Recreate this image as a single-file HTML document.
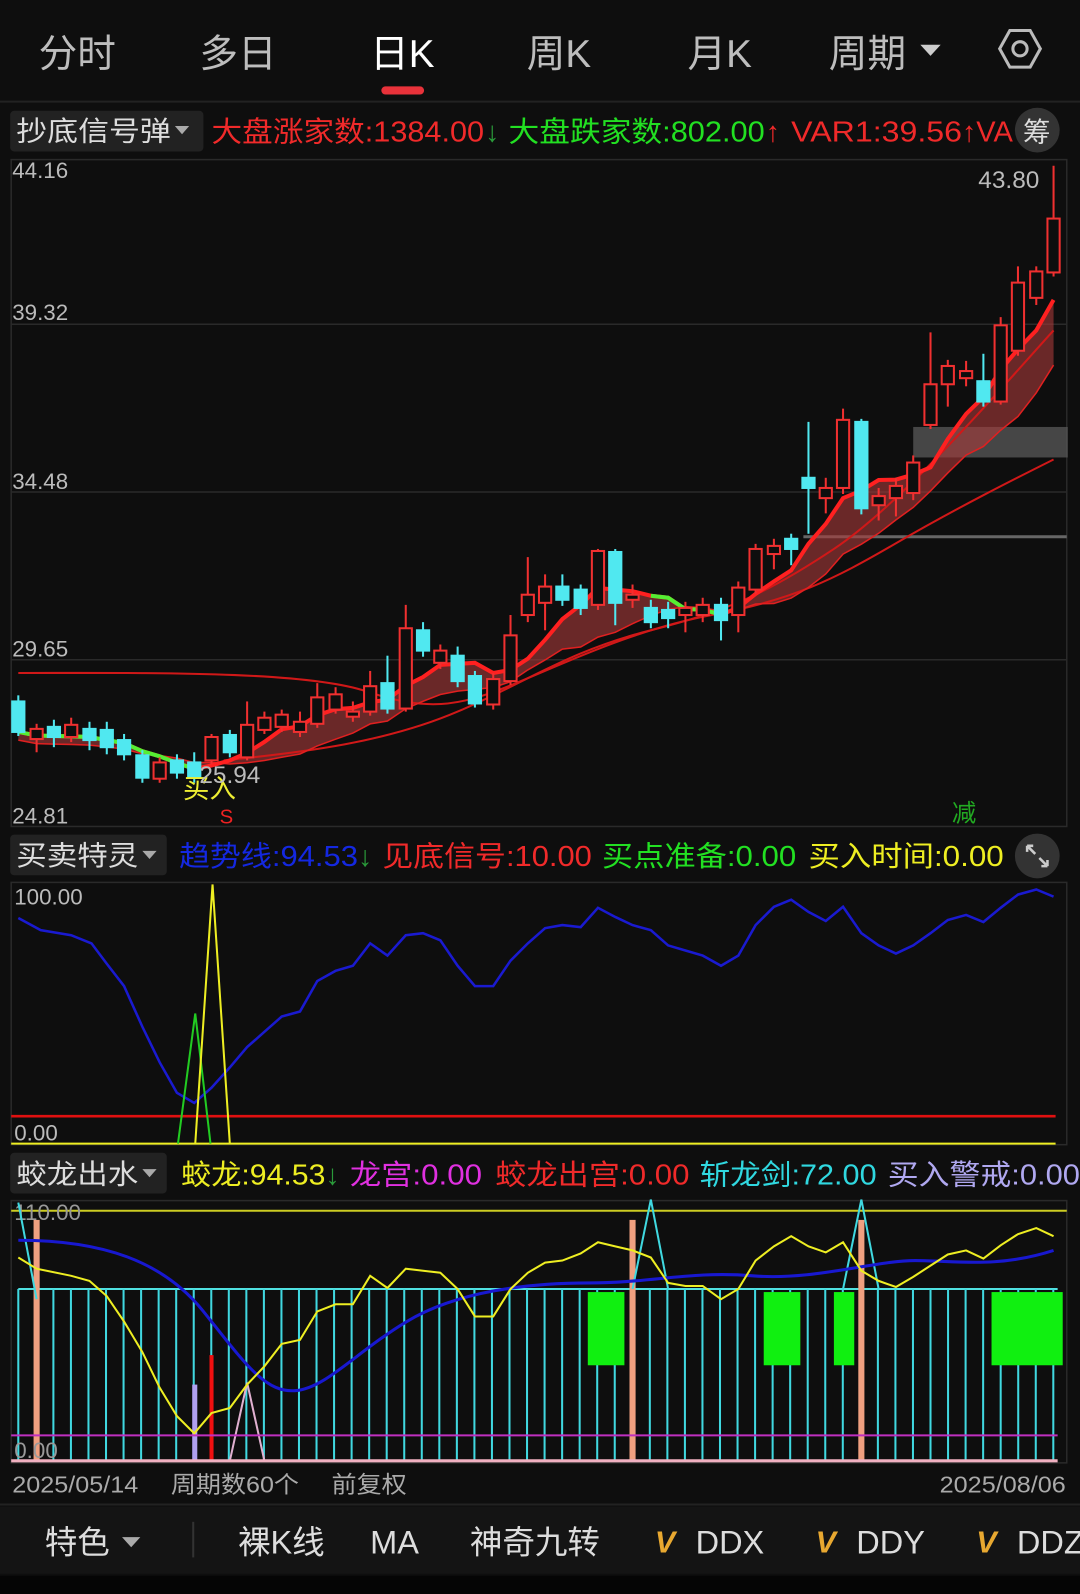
<!DOCTYPE html>
<html><head><meta charset="utf-8"><style>
html,body{margin:0;padding:0;background:#0d0d0d;width:1080px;height:1594px;overflow:hidden}
svg{display:block}
text{font-family:"Liberation Sans","Noto Sans CJK SC",sans-serif}
</style></head><body>
<svg id="s" width="1080" height="1594" viewBox="0 0 1062 1568" preserveAspectRatio="none" xmlns="http://www.w3.org/2000/svg">
<rect width="1062" height="1568" fill="#0e0e0e"/>
<g font-size="38" fill="#bdbdbd">
<text x="38" y="66">分时</text><text x="196" y="66">多日</text>
<text x="364" y="66" fill="#fff">日K</text><text x="518" y="66">周K</text>
<text x="676" y="66">月K</text><text x="815" y="66">周期</text>
</g>
<path d="M905 44h20l-10 11z" fill="#ccc"/>
<path d="M993 30l20 0l10 18l-10 18l-20 0l-10-18z" fill="none" stroke="#bbb" stroke-width="3"/>
<circle cx="1003" cy="48" r="7" fill="none" stroke="#bbb" stroke-width="3"/>
<rect x="375" y="85" width="42" height="8" rx="4" fill="#e8323a"/>
<line x1="0" y1="100" x2="1062" y2="100" stroke="#222" stroke-width="2"/>
<rect x="10" y="109" width="190" height="40" rx="4" fill="#222"/>
<text x="16" y="138" font-size="27" fill="#ddd" textLength="152" lengthAdjust="spacingAndGlyphs">抄底信号弹</text><path d="M172 124h14l-7 8z" fill="#aaa"/>
<g font-size="28" lengthAdjust="spacingAndGlyphs">
<text x="208" y="139" fill="#f02a2a" textLength="268" lengthAdjust="spacingAndGlyphs">大盘涨家数:1384.00</text>
<text x="477" y="139" fill="#2a9a3a">↓</text>
<text x="500" y="139" fill="#22e022" textLength="252" lengthAdjust="spacingAndGlyphs">大盘跌家数:802.00</text>
<text x="753" y="139" fill="#f02a2a">↑</text>
<text x="778" y="139" fill="#f02a2a" textLength="168" lengthAdjust="spacingAndGlyphs">VAR1:39.56</text>
<text x="946" y="139" fill="#f02a2a">↑</text>
<text x="960" y="139" fill="#f02a2a" textLength="36" lengthAdjust="spacingAndGlyphs">VA</text>
</g>
<circle cx="1020" cy="128" r="22" fill="#333"/><text x="1006" y="139" font-size="27" fill="#ddd">筹</text>
<rect x="11" y="157" width="1038" height="656" fill="none" stroke="#2a2a2a" stroke-width="1.5"/>
<g stroke="#2a2a2a" stroke-width="1.5"><line x1="11" y1="319" x2="1049" y2="319"/><line x1="11" y1="484" x2="1049" y2="484"/><line x1="11" y1="649" x2="1049" y2="649"/></g>
<g font-size="22" fill="#bbb"><text x="12" y="175">44.16</text><text x="12" y="315">39.32</text><text x="12" y="481">34.48</text><text x="12" y="646">29.65</text><text x="12" y="810">24.81</text><text x="962" y="185" font-size="24">43.80</text></g>
<rect x="898" y="420" width="152" height="30" fill="#555" opacity="0.8"/>
<line x1="790" y1="528" x2="1049" y2="528" stroke="#666" stroke-width="3"/>
<g id="main"></g>
<text x="180" y="785" font-size="26" fill="#ee3">买入</text>
<text x="196" y="770" font-size="24" fill="#bbb">25.94</text>
<text x="216" y="810" font-size="20" fill="#e22">S</text>
<text x="936" y="808" font-size="24" fill="#2a2">减</text>
<rect x="10" y="821" width="154" height="40" rx="4" fill="#222"/>
<text x="16" y="851" font-size="27" fill="#ddd" textLength="120" lengthAdjust="spacingAndGlyphs">买卖特灵</text><path d="M140 837h14l-7 8z" fill="#aaa"/>
<g font-size="28">
<text x="176" y="852" fill="#1428e0" textLength="176" lengthAdjust="spacingAndGlyphs">趋势线:94.53</text><text x="352" y="852" fill="#2a9a3a">↓</text>
<text x="376" y="852" fill="#f02a2a" textLength="206" lengthAdjust="spacingAndGlyphs">见底信号:10.00</text>
<text x="592" y="852" fill="#22e022" textLength="191" lengthAdjust="spacingAndGlyphs">买点准备:0.00</text>
<text x="795" y="852" fill="#eeee22" textLength="192" lengthAdjust="spacingAndGlyphs">买入时间:0.00</text>
</g>
<circle cx="1020" cy="842" r="22" fill="#333"/>
<path d="M1010 832l8 8M1010 832v6M1010 832h6M1030 852l-8-8M1030 852v-6M1030 852h-6" stroke="#ccc" stroke-width="2.5" fill="none"/>
<rect x="11" y="868" width="1038" height="258" fill="none" stroke="#2a2a2a" stroke-width="1.5"/>
<text x="14" y="890" font-size="22" fill="#bbb">100.00</text><text x="14" y="1122" font-size="22" fill="#bbb">0.00</text>
<line x1="11" y1="1098" x2="1038" y2="1098" stroke="#e01010" stroke-width="2.5"/>
<line x1="11" y1="1125" x2="1038" y2="1125" stroke="#eeee22" stroke-width="2"/>
<polyline fill="none" stroke="#1a1ad0" stroke-width="2.5" points="18,903 40,915 70,920 90,928 105,948 122,970 140,1010 157,1045 174,1075 191,1085 208,1070 226,1050 243,1030 260,1015 277,1000 295,995 312,965 330,955 347,950 364,928 381,940 399,920 416,918 433,925 450,950 467,970 485,970 502,945 519,928 536,913 553,910 571,912 588,893 605,902 622,910 640,915 657,930 674,935 691,940 709,950 726,940 743,910 761,892 778,885 795,897 812,906 829,892 847,918 864,930 881,938 898,930 915,918 932,905 950,900 967,907 984,893 1001,880 1019,875 1036,882"/>
<polyline fill="none" stroke="#22cc22" stroke-width="2" points="175,1125 192,997 207,1125"/>
<polyline fill="none" stroke="#eeee22" stroke-width="2" points="192,1125 209,870 226,1125"/>
<rect x="10" y="1134" width="154" height="40" rx="4" fill="#222"/>
<text x="16" y="1164" font-size="27" fill="#ddd" textLength="120" lengthAdjust="spacingAndGlyphs">蛟龙出水</text><path d="M140 1150h14l-7 8z" fill="#aaa"/>
<g font-size="28">
<text x="178" y="1165" fill="#eeee22" textLength="142" lengthAdjust="spacingAndGlyphs">蛟龙:94.53</text><text x="320" y="1165" fill="#2a9a3a">↓</text>
<text x="344" y="1165" fill="#e030e0" textLength="130" lengthAdjust="spacingAndGlyphs">龙宫:0.00</text>
<text x="487" y="1165" fill="#f02a2a" textLength="191" lengthAdjust="spacingAndGlyphs">蛟龙出宫:0.00</text>
<text x="688" y="1165" fill="#30d8e0" textLength="174" lengthAdjust="spacingAndGlyphs">斩龙剑:72.00</text>
<text x="873" y="1165" fill="#b0a8f0" textLength="189" lengthAdjust="spacingAndGlyphs">买入警戒:0.00</text>
</g>
<rect x="11" y="1181" width="1038" height="258" fill="none" stroke="#2a2a2a" stroke-width="1.5"/>
<line x1="11" y1="1191" x2="1049" y2="1191" stroke="#cccc22" stroke-width="2"/>
<text x="14" y="1200" font-size="22" fill="#999">110.00</text>
<g id="bot"></g>
<line x1="11" y1="1412" x2="1040" y2="1412" stroke="#c030c0" stroke-width="2"/>
<line x1="11" y1="1437" x2="1040" y2="1437" stroke="#f0b0c0" stroke-width="3"/>
<text x="14" y="1434" font-size="22" fill="#999">0.00</text>
<g font-size="23" fill="#aaa"><text x="12" y="1468" textLength="124" lengthAdjust="spacingAndGlyphs">2025/05/14</text><text x="168" y="1468" textLength="126" lengthAdjust="spacingAndGlyphs">周期数60个</text><text x="326" y="1468" textLength="74" lengthAdjust="spacingAndGlyphs">前复权</text><text x="924" y="1468" textLength="124" lengthAdjust="spacingAndGlyphs">2025/08/06</text></g>
<line x1="0" y1="1480" x2="1062" y2="1480" stroke="#222" stroke-width="2"/>
<rect x="0" y="1482" width="1062" height="66" fill="#141414"/>
<g font-size="32" fill="#ddd"><text x="44" y="1528">特色</text><text x="234" y="1528">裸K线</text><text x="364" y="1528">MA</text><text x="462" y="1528">神奇九转</text><text x="684" y="1528">DDX</text><text x="842" y="1528">DDY</text><text x="1000" y="1528">DDZ</text></g>
<path d="M120 1512h18l-9 10z" fill="#aaa"/>
<line x1="190" y1="1497" x2="190" y2="1532" stroke="#333" stroke-width="2"/>
<g font-size="30" fill="#e8a830" font-style="italic" font-weight="bold"><text x="644" y="1527">V</text><text x="802" y="1527">V</text><text x="960" y="1527">V</text></g>
<rect x="0" y="1550" width="1062" height="18" fill="#050505"/>
</svg>
<script>
var NS="http://www.w3.org/2000/svg";
function el(p,t,a){var e=document.createElementNS(NS,t);for(var k in a)e.setAttribute(k,a[k]);p.appendChild(e);return e;}
var m=document.getElementById('main');
var c=[[18,690,720,684,724,0],[36,717,727,712,740,1],[53,715,725,708,735,0],[70,713,725,706,730,1],[88,717,728,710,738,0],[105,718,735,710,742,0],[122,728,742,722,748,0],[140,743,765,738,770,0],[157,766,750,745,770,1],[174,748,760,742,766,0],[191,750,765,740,770,0],[208,748,725,722,752,1],[226,723,740,718,745,0],[243,745,713,690,748,1],[260,718,706,700,722,1],[277,715,703,698,720,1],[295,720,710,700,725,1],[312,712,686,672,716,1],[330,698,683,676,702,1],[347,705,700,690,710,1],[364,700,675,660,704,1],[381,672,697,645,702,0],[399,697,618,595,700,1],[416,620,640,612,646,0],[433,652,640,634,658,1],[450,645,670,636,676,0],[467,665,692,660,696,0],[485,693,668,662,698,1],[502,670,625,605,674,1],[519,605,585,548,612,1],[536,593,577,565,620,1],[553,577,590,565,596,0],[571,580,598,575,605,0],[588,595,542,540,600,1],[605,543,593,540,615,0],[622,590,585,575,598,1],[640,598,612,590,618,0],[657,600,608,592,618,0],[674,605,598,592,622,1],[691,605,595,588,612,1],[709,595,610,588,630,0],[726,605,578,572,622,1],[743,580,540,535,584,1],[761,545,537,530,560,1],[778,530,540,525,556,0],[795,470,480,415,525,0],[812,490,480,470,505,1],[829,480,413,402,486,1],[847,415,500,412,506,0],[864,497,488,480,512,1],[881,490,478,470,508,1],[898,485,455,448,492,1],[915,418,378,327,422,1],[932,378,360,354,400,1],[950,372,365,355,380,1],[967,375,395,348,400,0],[984,395,320,312,398,1],[1001,345,278,262,350,1],[1019,293,267,262,300,1],[1036,268,215,163,272,1]];
var ma10=[];
c.forEach(function(d,i){var s=0,n=0;for(var j=Math.max(0,i-4);j<=i;j++){s+=c[j][2];n++;}ma10.push([d[0],s/n]);});
var band=[];
c.forEach(function(d,i){var s=0,n=0;for(var j=Math.max(0,i-9);j<=i;j++){s+=c[j][2];n++;}band.push([d[0],s/n+8]);});
var p1=ma10.map(function(p){return p[0]+','+p[1].toFixed(1)}).join(' ');
var p2=band.slice().reverse().map(function(p){return p[0]+','+p[1].toFixed(1)}).join(' ');
el(m,'polygon',{points:p1+' '+p2,fill:'#a83a3a',opacity:'0.6'});
el(m,'path',{d:'M18 662 C150 662 300 660 360 680 S450 695 500 675 S620 620 700 605 S820 570 880 535 S1000 470 1036 452',fill:'none',stroke:'#d01818','stroke-width':'2'});
el(m,'path',{d:'M220 748 C300 740 380 730 450 700 S560 640 640 620 S760 580 820 540 S960 410 1036 325',fill:'none',stroke:'#d01818','stroke-width':'2'});
el(m,'polyline',{points:band.map(function(p){return p[0]+','+p[1].toFixed(1)}).join(' '),fill:'none',stroke:'#e02020','stroke-width':'1.5'});
el(m,'polyline',{points:p1,fill:'none',stroke:'#ff2020','stroke-width':'4'});
el(m,'polyline',{points:ma10.slice(0,11).map(function(p){return p[0]+','+p[1].toFixed(1)}).join(' '),fill:'none',stroke:'#55ee33','stroke-width':'4'});
el(m,'polyline',{points:ma10.slice(36,41).map(function(p){return p[0]+','+p[1].toFixed(1)}).join(' '),fill:'none',stroke:'#55ee33','stroke-width':'4'});
c.forEach(function(d){var col=d[5]?'#f03030':'#50e8f0';
el(m,'line',{x1:d[0],x2:d[0],y1:d[3],y2:d[4],stroke:col,'stroke-width':'2'});
var t=Math.min(d[1],d[2]),h=Math.max(2,Math.abs(d[1]-d[2]));
el(m,'rect',{x:d[0]-6,y:t,width:12,height:h,fill:d[5]?'#0e0e0e':col,stroke:col,'stroke-width':'2'});});
var b=document.getElementById('bot');
el(b,'line',{x1:18,x2:1040,y1:1268,y2:1268,stroke:'#50e0e0','stroke-width':'2'});
for(var i=0;i<60;i++){var x=18+i*17.25;el(b,'line',{x1:x,x2:x,y1:1268,y2:1437,stroke:'#40d8e0','stroke-width':'2'});}
[[578,36],[751,36],[820,20],[975,70]].forEach(function(r){el(b,'rect',{x:r[0],y:1271,width:r[1],height:72,fill:'#10f010'});});
[36,622,847].forEach(function(x){el(b,'rect',{x:x-3,y:1200,width:6,height:237,fill:'#f0a080'});});
el(b,'rect',{x:189,y:1362,width:5,height:75,fill:'#b0a0f0'});
el(b,'rect',{x:206,y:1333,width:4,height:104,fill:'#f01010'});
el(b,'polyline',{points:'226,1437 243,1360 260,1437',fill:'none',stroke:'#e0b0d0','stroke-width':'2'});
el(b,'polyline',{points:'18,1183 36,1278',fill:'none',stroke:'#40d8e0','stroke-width':'2'});
el(b,'polyline',{points:'622,1268 640,1180 657,1268',fill:'none',stroke:'#40d8e0','stroke-width':'2'});
el(b,'polyline',{points:'829,1268 847,1180 864,1268',fill:'none',stroke:'#40d8e0','stroke-width':'2'});
el(b,'path',{d:'M18 1220 C100 1220 160 1240 200 1290 S260 1370 290 1368 S350 1330 400 1300 S520 1262 580 1262 S680 1250 740 1255 S860 1240 900 1240 S980 1248 1036 1230',fill:'none',stroke:'#1818d0','stroke-width':'3'});
el(b,'polyline',{points:'18,1237 36,1248 70,1255 88,1260 105,1275 122,1300 140,1330 157,1365 174,1393 191,1410 208,1390 226,1385 243,1362 260,1344 277,1322 295,1318 312,1290 330,1283 347,1283 364,1255 381,1267 399,1248 416,1250 433,1252 450,1268 467,1295 485,1295 502,1268 519,1252 536,1242 553,1240 571,1233 588,1222 605,1226 622,1230 640,1237 657,1262 674,1265 691,1265 709,1278 726,1268 743,1240 761,1226 778,1216 795,1226 812,1232 829,1222 847,1250 864,1260 881,1266 898,1256 915,1245 932,1234 950,1230 967,1238 984,1225 1001,1214 1019,1208 1036,1216',fill:'none',stroke:'#eeee22','stroke-width':'2'});
</script>
</body></html>
